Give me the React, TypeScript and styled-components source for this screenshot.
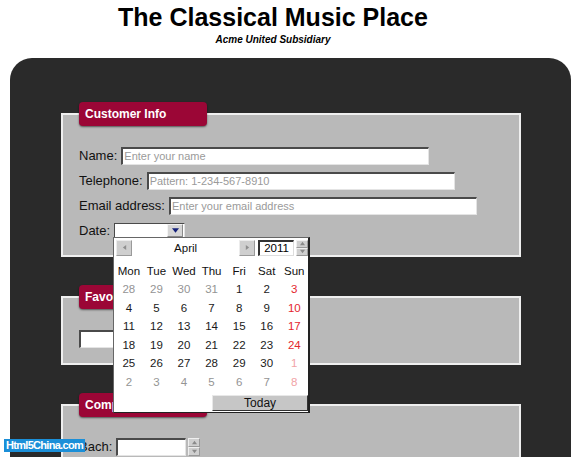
import styled, { createGlobalStyle } from "styled-components";

const GlobalStyle = createGlobalStyle`
  html, body {
    margin: 0;
    padding: 0;
    background: #fff;
    overflow: hidden;
  }
  body {
    font-family: "Liberation Sans", Arial, sans-serif;
    color: #000;
  }
`;

type Tone = "normal" | "muted" | "sun" | "mutedSun";

interface DayCell {
  day: number;
  tone: Tone;
}

const WEEKDAYS = ["Mon", "Tue", "Wed", "Thu", "Fri", "Sat", "Sun"];

// April 2011, week starts on Monday
const buildMonth = (): DayCell[] => {
  const cells: DayCell[] = [];
  const lead = [28, 29, 30, 31];
  lead.forEach((d) => cells.push({ day: d, tone: "muted" }));
  for (let d = 1; d <= 30; d++) cells.push({ day: d, tone: "normal" });
  let next = 1;
  while (cells.length < 42) cells.push({ day: next++, tone: "muted" });
  return cells.map((c, i) =>
    i % 7 === 6 ? { ...c, tone: c.tone === "muted" ? "mutedSun" : "sun" } : c
  );
};

const toneColor: Record<Tone, string> = {
  normal: "#1a1a1a",
  muted: "#949494",
  sun: "#e4262e",
  mutedSun: "#f1a3a6",
};

const Arrow = ({ dir, color, size = 6 }: { dir: "up" | "down" | "left" | "right"; color: string; size?: number }) => {
  const paths = {
    up: "M0 5 L3 1 L6 5 Z",
    down: "M0 1 L3 5 L6 1 Z",
    left: "M5 0 L1 3 L5 6 Z",
    right: "M1 0 L5 3 L1 6 Z",
  };
  return (
    <svg width={size} height={size} viewBox="0 0 6 6">
      <path d={paths[dir]} fill={color} />
    </svg>
  );
};

const Spinner = ({ height }: { height: number }) => (
  <SpinBox style={{ height }}>
    <SpinHalf>
      <Arrow dir="up" color="#8a8a8a" size={5} />
    </SpinHalf>
    <SpinHalf>
      <Arrow dir="down" color="#8a8a8a" size={5} />
    </SpinHalf>
  </SpinBox>
);

const Calendar = () => {
  const cells = buildMonth();
  return (
    <Popup>
      <NavBar>
        <NavButton>
          <Arrow dir="left" color="#8f8f8f" size={5} />
        </NavButton>
        <MonthName>April</MonthName>
        <NavButton>
          <Arrow dir="right" color="#8f8f8f" size={5} />
        </NavButton>
        <YearBox>2011</YearBox>
        <Spinner height={16} />
      </NavBar>
      <DayGrid>
        {WEEKDAYS.map((w) => (
          <WeekdayName key={w}>{w}</WeekdayName>
        ))}
        {cells.map((c, i) => (
          <Day key={i} $tone={c.tone}>
            {c.day}
          </Day>
        ))}
      </DayGrid>
      <Footer>
        <TodayButton>Today</TodayButton>
      </Footer>
    </Popup>
  );
};

const App = () => {
  return (
    <Page>
      <GlobalStyle />
      <Header>
        <Title>The Classical Music Place</Title>
        <Subtitle>Acme United Subsidiary</Subtitle>
      </Header>

      <Panel>
        <Section>
          <Legend>Customer Info</Legend>
          <Row>
            <Label>Name:</Label>
            <TextInput $width={308} placeholder="Enter your name" />
          </Row>
          <Row>
            <Label>Telephone:</Label>
            <TextInput $width={308} placeholder="Pattern: 1-234-567-8910" />
          </Row>
          <Row>
            <Label>Email address:</Label>
            <TextInput $width={308} placeholder="Enter your email address" />
          </Row>
          <Row>
            <Label>Date:</Label>
            <DateField>
              <DropButton>
                <Arrow dir="down" color="#14207a" size={7} />
              </DropButton>
              <Calendar />
            </DateField>
          </Row>
        </Section>

        <Section>
          <Legend>Favorite Composer</Legend>
          <Row>
            <TextInput $width={160} />
          </Row>
        </Section>

        <Section>
          <Legend>Composer Ratings</Legend>
          <Row>
            <Label>Bach:</Label>
            <NumberField>
              <TextInput $width={70} />
              <Spinner height={18} />
            </NumberField>
          </Row>
        </Section>
      </Panel>

      <Watermark>Html5China.com</Watermark>
    </Page>
  );
};

export default App;

const Page = styled.div`
  position: relative;
  width: 580px;
  height: 457px;
  overflow: hidden;
`;

const Header = styled.header`
  width: 546px;
  padding-top: 3px;
  text-align: center;
`;

const Title = styled.h1`
  margin: 0;
  font-size: 25px;
  line-height: 29px;
  font-weight: bold;
`;

const Subtitle = styled.p`
  margin: 2px 0 0;
  font-size: 10px;
  line-height: 12px;
  font-weight: bold;
  font-style: italic;
`;

const Panel = styled.main`
  box-sizing: border-box;
  width: 561px;
  min-height: 520px;
  margin: 12px 0 0 10px;
  padding: 44px 0 0 51px;
  background: #2a2a2a;
  border-radius: 22px 22px 0 0;
`;

const Section = styled.fieldset`
  box-sizing: border-box;
  width: 460px;
  margin: 0 0 28px;
  padding: 17px 16px 12px;
  border: 2px solid #efefef;
  background: #b9b9b9;
`;

const Legend = styled.legend`
  box-sizing: border-box;
  width: 128px;
  height: 24px;
  margin: 0;
  padding: 0 6px;
  background: #9b0636;
  color: #fff;
  font-size: 12px;
  font-weight: bold;
  line-height: 24px;
  white-space: nowrap;
  overflow: hidden;
  border-radius: 4px;
  box-shadow: 0 1px 2px rgba(0, 0, 0, 0.55);
`;

const Row = styled.div`
  display: flex;
  align-items: center;
  gap: 4px;
  height: 25px;
`;

const Label = styled.span`
  font-size: 13px;
  color: #111;
`;

const TextInput = styled.input<{ $width: number }>`
  box-sizing: border-box;
  width: ${({ $width }) => $width}px;
  height: 18px;
  margin: 0;
  padding: 0 0 0 1px;
  border-style: solid;
  border-width: 2px 1px 1px 2px;
  border-color: #4a4a4a #e4e4e4 #e4e4e4 #4a4a4a;
  background: #fff;
  font-family: "Liberation Sans", Arial, sans-serif;
  font-size: 11px;
  outline: none;

  &::placeholder {
    color: #9a9a9a;
  }
`;

const DateField = styled.div`
  position: relative;
  box-sizing: border-box;
  width: 71px;
  height: 16px;
  display: flex;
  justify-content: flex-end;
  align-items: center;
  padding-right: 1px;
  background: #fff;
  border-style: solid;
  border-width: 1px;
  border-color: #4a4a4a #e4e4e4 #e4e4e4 #4a4a4a;
`;

const DropButton = styled.div`
  box-sizing: border-box;
  width: 16px;
  height: 13px;
  display: flex;
  align-items: center;
  justify-content: center;
  background: #d6d6d6;
  border: 1px solid;
  border-color: #f4f4f4 #8a8a8a #8a8a8a #f4f4f4;
`;

const Popup = styled.div`
  position: absolute;
  top: calc(100% - 1px);
  left: -2px;
  z-index: 5;
  box-sizing: border-box;
  width: 197px;
  height: 176px;
  display: flex;
  flex-direction: column;
  padding-top: 2px;
  background: #fff;
  border: 1px solid #666;
  border-right: 2px solid #222;
  border-bottom: 1px solid #222;
  font-size: 11px;
`;

const NavBar = styled.div`
  display: flex;
  align-items: center;
  gap: 3px;
  height: 16px;
  padding-left: 2px;
`;

const NavButton = styled.div`
  box-sizing: border-box;
  width: 16px;
  height: 16px;
  display: flex;
  align-items: center;
  justify-content: center;
  background: #cfcfcf;
  border: 1px solid;
  border-color: #ececec #9a9a9a #9a9a9a #ececec;
`;

const MonthName = styled.span`
  flex: 1;
  text-align: center;
  font-size: 11.5px;
  color: #111;
`;

const YearBox = styled.div`
  box-sizing: border-box;
  width: 36px;
  height: 16px;
  margin-right: -1px;
  text-align: center;
  line-height: 13px;
  font-size: 11.5px;
  background: #fff;
  border-style: solid;
  border-width: 2px 1px 1px 2px;
  border-color: #333 #ddd #ddd #333;
`;

const SpinBox = styled.div`
  box-sizing: border-box;
  width: 12px;
  display: flex;
  flex-direction: column;
`;

const SpinHalf = styled.div`
  flex: 1;
  display: flex;
  align-items: center;
  justify-content: center;
  background: #cfcfcf;
  border: 1px solid;
  border-color: #efefef #9a9a9a #9a9a9a #efefef;
`;

const DayGrid = styled.div`
  display: grid;
  grid-template-columns: repeat(7, 1fr);
  grid-auto-rows: 18.5px;
  margin-top: 6px;
  padding-left: 1px;
`;

const WeekdayName = styled.div`
  text-align: center;
  line-height: 18px;
  font-size: 11.5px;
  color: #111;
`;

const Day = styled.div<{ $tone: Tone }>`
  text-align: center;
  line-height: 18px;
  font-size: 11.5px;
  color: ${({ $tone }) => toneColor[$tone]};
`;

const Footer = styled.div`
  margin-top: auto;
  display: flex;
  justify-content: flex-end;
  padding-bottom: 1px;
`;

const TodayButton = styled.div`
  box-sizing: border-box;
  width: 96px;
  height: 16px;
  text-align: center;
  line-height: 14px;
  font-size: 12px;
  color: #111;
  background: #c6c6c6;
  border: 1px solid;
  border-color: #e8e8e8 #333 #333 #e8e8e8;
`;

const NumberField = styled.div`
  display: flex;
  align-items: center;
  gap: 2px;
`;

const Watermark = styled.div`
  position: absolute;
  left: 4px;
  top: 439px;
  height: 13px;
  padding: 0 2px;
  background: #1b8fd8;
  color: #fff;
  font-size: 11px;
  font-weight: bold;
  line-height: 13px;
  letter-spacing: -0.7px;
`;
